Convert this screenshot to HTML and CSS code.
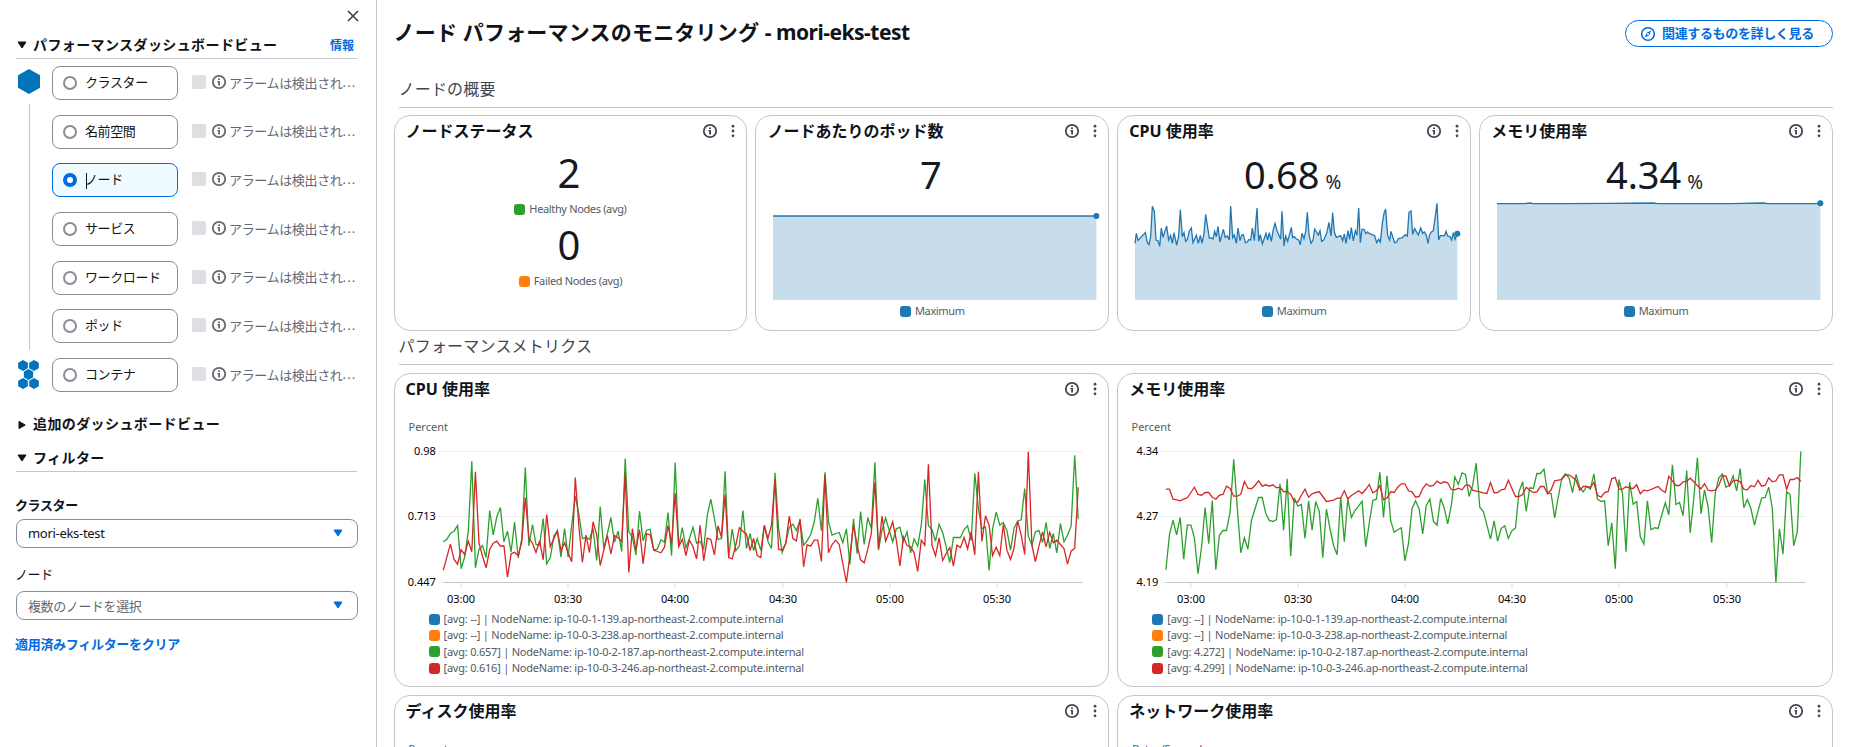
FILE: index.html
```
<!DOCTYPE html>
<html lang="ja">
<head>
    <meta charset="UTF-8">
    <meta name="viewport" content="width=device-width, initial-scale=1.0">
    <title>ノード パフォーマンスのモニタリング</title>
    <link rel="stylesheet" href="styles.css">
</head>
<body>
    <!-- shared icons -->
    <svg class="icon-defs" width="0" height="0">
        <symbol id="icon-info" viewBox="0 0 16 16">
            <circle cx="8" cy="8" r="6.2" fill="none" stroke="currentColor" stroke-width="1.8"/>
            <path d="M7 4.4h2v1.6H7zM6.4 7H9v4.6H7.2V8.2h-.8z" fill="currentColor"/>
        </symbol>
        <symbol id="icon-more" viewBox="0 0 16 16">
            <g fill="currentColor"><circle cx="8" cy="3.2" r="1.4"/><circle cx="8" cy="8" r="1.4"/><circle cx="8" cy="12.8" r="1.4"/></g>
        </symbol>
        <symbol id="icon-down" viewBox="0 0 10 8">
            <path d="M1 1h8L5 7z" fill="currentColor" stroke="currentColor" stroke-linejoin="round"/>
        </symbol>
        <symbol id="icon-right" viewBox="0 0 10 10">
            <path d="M2 1.4v7.2L8.2 5z" fill="currentColor" stroke="currentColor" stroke-linejoin="round"/>
        </symbol>
        <symbol id="hex" viewBox="0 0 22 25">
            <path d="M11 0l11 6.2v12.6L11 25 0 18.8V6.2z" fill="#0073bb"/>
        </symbol>
    </svg>

    <div class="app">
        <aside class="sidebar">
            <div class="close-row">
                <svg class="close" viewBox="0 0 12 12"><path d="M1 1l10 10M11 1L1 11" stroke="#424650" stroke-width="1.7"/></svg>
            </div>
            <div class="section-head lined">
                <svg class="caret"><use href="#icon-down"/></svg>
                <h3>パフォーマンスダッシュボードビュー</h3>
                <a class="info-link">情報</a>
            </div>

            <div class="views">
                <div class="rail">
                    <svg class="hex-one"><use href="#hex"/></svg>
                    <div class="rail-line"></div>
                    <svg class="hex-many" viewBox="0 0 21 29">
                        <use href="#hex" x="0" y="0" width="10" height="11"/>
                        <use href="#hex" x="11" y="0" width="10" height="11"/>
                        <use href="#hex" x="5.5" y="9" width="10" height="11"/>
                        <use href="#hex" x="0" y="18" width="10" height="11"/>
                        <use href="#hex" x="11" y="18" width="10" height="11"/>
                    </svg>
                </div>
                <div class="view-list">
                    <div class="view-row">
                        <div class="tile"><span class="radio"></span>クラスター</div>
                        <div class="alarm"><span class="alarm-box"></span><svg class="icon"><use href="#icon-info"/></svg>アラームは検出され<i>...</i></div>
                    </div>
                    <div class="view-row">
                        <div class="tile"><span class="radio"></span>名前空間</div>
                        <div class="alarm"><span class="alarm-box"></span><svg class="icon"><use href="#icon-info"/></svg>アラームは検出され<i>...</i></div>
                    </div>
                    <div class="view-row">
                        <div class="tile selected"><span class="radio"></span>ノード<span class="text-cursor"></span></div>
                        <div class="alarm"><span class="alarm-box"></span><svg class="icon"><use href="#icon-info"/></svg>アラームは検出され<i>...</i></div>
                    </div>
                    <div class="view-row">
                        <div class="tile"><span class="radio"></span>サービス</div>
                        <div class="alarm"><span class="alarm-box"></span><svg class="icon"><use href="#icon-info"/></svg>アラームは検出され<i>...</i></div>
                    </div>
                    <div class="view-row">
                        <div class="tile"><span class="radio"></span>ワークロード</div>
                        <div class="alarm"><span class="alarm-box"></span><svg class="icon"><use href="#icon-info"/></svg>アラームは検出され<i>...</i></div>
                    </div>
                    <div class="view-row">
                        <div class="tile"><span class="radio"></span>ポッド</div>
                        <div class="alarm"><span class="alarm-box"></span><svg class="icon"><use href="#icon-info"/></svg>アラームは検出され<i>...</i></div>
                    </div>
                    <div class="view-row">
                        <div class="tile"><span class="radio"></span>コンテナ</div>
                        <div class="alarm"><span class="alarm-box"></span><svg class="icon"><use href="#icon-info"/></svg>アラームは検出され<i>...</i></div>
                    </div>
                </div>
            </div>

            <div class="section-head more-views">
                <svg class="caret side"><use href="#icon-right"/></svg>
                <h3>追加のダッシュボードビュー</h3>
            </div>
            <div class="section-head lined filters">
                <svg class="caret"><use href="#icon-down"/></svg>
                <h3>フィルター</h3>
            </div>

            <div class="field">
                <label class="strong">クラスター</label>
                <div class="select"><span class="latin">mori-eks-test</span><svg><use href="#icon-down"/></svg></div>
            </div>
            <div class="field node-field">
                <label>ノード</label>
                <div class="select placeholder"><span>複数のノードを選択</span><svg><use href="#icon-down"/></svg></div>
            </div>
            <a class="clear-link">適用済みフィルターをクリア</a>
        </aside>

        <main class="main">
            <header class="page-head">
                <h1>ノード パフォーマンスのモニタリング <span class="latin">- mori-eks-test</span></h1>
                <button class="explore">
                    <svg viewBox="0 0 16 16"><circle cx="8" cy="8" r="6.3" fill="none" stroke="currentColor" stroke-width="1.6"/><path d="M11.2 4.6L9.3 9.3 4.8 11.4 6.7 6.7z" fill="currentColor"/><circle cx="8" cy="8" r="1" fill="#fff"/></svg>
                    <span>関連するものを詳しく見る</span>
                </button>
            </header>

            <h2 class="group-title">ノードの概要</h2>
            <div class="overview">
                <section class="card">
                    <div class="card-head"><h3>ノードステータス</h3><svg class="icon"><use href="#icon-info"/></svg><svg class="icon dots"><use href="#icon-more"/></svg></div>
                    <div class="status">
                        <div class="number">2</div>
                        <div class="key"><span class="swatch green"></span>Healthy Nodes (avg)</div>
                        <div class="number">0</div>
                        <div class="key"><span class="swatch orange"></span>Failed Nodes (avg)</div>
                    </div>
                </section>
                <section class="card">
                    <div class="card-head"><h3>ノードあたりのポッド数</h3><svg class="icon"><use href="#icon-info"/></svg><svg class="icon dots"><use href="#icon-more"/></svg></div>
                    <div class="number big">7</div>
                    <svg class="spark" data-spark="pods" viewBox="0 0 330 106"></svg>
                    <div class="key"><span class="swatch blue"></span>Maximum</div>
                </section>
                <section class="card">
                    <div class="card-head"><h3><span class="latin">CPU</span> 使用率</h3><svg class="icon"><use href="#icon-info"/></svg><svg class="icon dots"><use href="#icon-more"/></svg></div>
                    <div class="number big">0.68<small>%</small></div>
                    <svg class="spark" data-spark="cpu" viewBox="0 0 330 106"></svg>
                    <div class="key"><span class="swatch blue"></span>Maximum</div>
                </section>
                <section class="card">
                    <div class="card-head"><h3>メモリ使用率</h3><svg class="icon"><use href="#icon-info"/></svg><svg class="icon dots"><use href="#icon-more"/></svg></div>
                    <div class="number big">4.34<small>%</small></div>
                    <svg class="spark" data-spark="memory" viewBox="0 0 330 106"></svg>
                    <div class="key"><span class="swatch blue"></span>Maximum</div>
                </section>
            </div>

            <h2 class="group-title metrics">パフォーマンスメトリクス</h2>
            <div class="charts">
                <section class="card">
                    <div class="card-head"><h3><span class="latin">CPU</span> 使用率</h3><svg class="icon"><use href="#icon-info"/></svg><svg class="icon dots"><use href="#icon-more"/></svg></div>
                    <svg class="chart" data-chart="cpu"></svg>
                    <ul class="legend">
                        <li><span class="swatch blue"></span>[avg: --] | NodeName: ip-10-0-1-139.ap-northeast-2.compute.internal</li>
                        <li><span class="swatch orange"></span>[avg: --] | NodeName: ip-10-0-3-238.ap-northeast-2.compute.internal</li>
                        <li><span class="swatch green"></span>[avg: 0.657] | NodeName: ip-10-0-2-187.ap-northeast-2.compute.internal</li>
                        <li><span class="swatch red"></span>[avg: 0.616] | NodeName: ip-10-0-3-246.ap-northeast-2.compute.internal</li>
                    </ul>
                </section>
                <section class="card">
                    <div class="card-head"><h3>メモリ使用率</h3><svg class="icon"><use href="#icon-info"/></svg><svg class="icon dots"><use href="#icon-more"/></svg></div>
                    <svg class="chart" data-chart="memory"></svg>
                    <ul class="legend">
                        <li><span class="swatch blue"></span>[avg: --] | NodeName: ip-10-0-1-139.ap-northeast-2.compute.internal</li>
                        <li><span class="swatch orange"></span>[avg: --] | NodeName: ip-10-0-3-238.ap-northeast-2.compute.internal</li>
                        <li><span class="swatch green"></span>[avg: 4.272] | NodeName: ip-10-0-2-187.ap-northeast-2.compute.internal</li>
                        <li><span class="swatch red"></span>[avg: 4.299] | NodeName: ip-10-0-3-246.ap-northeast-2.compute.internal</li>
                    </ul>
                </section>
                <section class="card">
                    <div class="card-head"><h3>ディスク使用率</h3><svg class="icon"><use href="#icon-info"/></svg><svg class="icon dots"><use href="#icon-more"/></svg></div>
                    <div class="unit">Percent</div>
                </section>
                <section class="card">
                    <div class="card-head"><h3>ネットワーク使用率</h3><svg class="icon"><use href="#icon-info"/></svg><svg class="icon dots"><use href="#icon-more"/></svg></div>
                    <div class="unit">Bytes/Second</div>
                </section>
            </div>
        </main>
    </div>
    <script src="charts.js"></script>
</body>
</html>
```

FILE: styles.css
```
* {
    margin: 0;
    padding: 0;
    box-sizing: border-box;
}
body {
    font-family: "Noto Sans", "Noto Sans CJK JP", sans-serif;
    font-size: 13px;
    color: #0f141a;
    background: #fff;
    overflow: hidden;
}
.icon-defs {
    position: absolute;
}
.app {
    display: flex;
    height: 747px;
    overflow: hidden;
}
svg {
    display: block;
    flex: none;
}
i {
    font-style: normal;
}

/* Sidebar */
.sidebar {
    width: 377px;
    flex: none;
    padding: 0 19px 0 16px;
    border-right: 1px solid #c6c6cd;
}
.close-row {
    display: flex;
    justify-content: flex-end;
    padding: 10px 0 0;
    height: 32px;
}
.close {
    width: 12px;
    height: 12px;
    margin-right: -2px;
}
.section-head {
    display: flex;
    align-items: center;
    height: 27px;
    padding-left: 1px;
}
.section-head.lined {
    border-bottom: 1px solid #c6c6cd;
}
.section-head h3 {
    font-size: 14px;
    font-weight: 700;
    line-height: 20px;
    margin-left: 6px;
    padding-bottom: 1px;
    letter-spacing: 0.4px;
    white-space: nowrap;
}
.caret {
    width: 10px;
    height: 8px;
}
.caret.side {
    height: 10px;
}
.info-link {
    margin-left: auto;
    margin-right: 3px;
    padding-bottom: 1px;
    font-size: 12px;
    font-weight: 700;
    color: #006ce0;
}
.views {
    display: flex;
    padding-top: 7px;
}
.rail {
    width: 36px;
    padding: 3px 0 0 2px;
}
.hex-one {
    width: 22px;
    height: 25px;
}
.rail-line {
    width: 1px;
    height: 246px;
    margin: 10px 0 10px 11px;
    background: #c6c6cd;
}
.hex-many {
    width: 21px;
    height: 29px;
}
.view-list {
    flex: 1;
    display: flex;
    flex-direction: column;
    gap: 14.7px;
}
.view-row {
    display: flex;
    align-items: center;
    height: 34px;
}
.tile {
    position: relative;
    display: flex;
    align-items: center;
    width: 126px;
    height: 34px;
    padding: 0 0 2px 10px;
    border: 1px solid #8c8c94;
    border-radius: 8px;
    font-size: 13px;
    letter-spacing: -0.4px;
    line-height: 18px;
}
.tile.selected {
    background: #f0fbff;
    border-color: #006ce0;
}
.radio {
    width: 14px;
    height: 14px;
    margin: 2px 8px 0 0;
    border: 2px solid #8c8c94;
    border-radius: 50%;
    background: #fff;
}
.selected .radio {
    border: 4.5px solid #006ce0;
}
.text-cursor {
    position: absolute;
    left: 33px;
    top: 9px;
    width: 1px;
    height: 16px;
    background: #0f141a;
}
.alarm {
    display: flex;
    align-items: center;
    margin-left: 14px;
    padding-bottom: 2px;
    color: #656871;
    letter-spacing: -0.35px;
    white-space: nowrap;
}
.alarm-box {
    width: 14px;
    height: 14px;
    margin-right: 5px;
    border-radius: 2px;
    background: #dedee3;
}
.alarm .icon {
    margin-right: 2px;
}
.alarm i {
    letter-spacing: 1.2px;
}
.icon {
    width: 16px;
    height: 16px;
}
.more-views {
    margin-top: 19px;
}
.filters {
    margin-top: 7px;
}
.field {
    margin-top: 23px;
}
.field label {
    display: block;
    margin-left: -1px;
    line-height: 20px;
    letter-spacing: -0.4px;
}
.field .strong {
    font-weight: 700;
}
.select {
    display: flex;
    align-items: center;
    justify-content: space-between;
    width: 342px;
    height: 29px;
    margin-top: 4px;
    padding: 0 14px 1px 11px;
    border: 1px solid #8c8c94;
    border-radius: 8px;
}
.select .latin {
    letter-spacing: -0.3px;
}
.select svg {
    width: 10px;
    height: 8px;
    color: #006ce0;
}
.select.placeholder {
    color: #656871;
    letter-spacing: -0.4px;
}
.node-field {
    margin-top: 16px;
}
.node-field .select {
    margin-top: 7px;
}
.clear-link {
    display: block;
    margin: 14px 0 0 -1px;
    line-height: 20px;
    font-weight: 700;
    letter-spacing: -0.3px;
    color: #006ce0;
}

/* Main */
.main {
    flex: 1;
    min-width: 0;
    padding: 0 22px 0 16.5px;
}
.page-head {
    display: flex;
    align-items: center;
    justify-content: space-between;
    padding-top: 20px;
}
.page-head h1 {
    font-size: 21px;
    font-weight: 700;
    line-height: 25px;
    padding-bottom: 2px;
    letter-spacing: 0.2px;
    white-space: nowrap;
}
.page-head .latin {
    letter-spacing: -0.5px;
}
.explore {
    display: flex;
    align-items: center;
    width: 208px;
    height: 27px;
    padding-left: 14px;
    border: 1px solid #006ce0;
    border-radius: 14px;
    background: #fff;
    color: #006ce0;
    font: inherit;
    font-weight: 700;
    letter-spacing: -0.35px;
    white-space: nowrap;
}
.explore svg {
    width: 16px;
    height: 16px;
    margin-right: 6px;
}
.explore span {
    padding-bottom: 2px;
}
.group-title {
    height: 61px;
    padding: 32px 0 0 5px;
    font-size: 16px;
    font-weight: 400;
    line-height: 20px;
    letter-spacing: 0.2px;
    color: #424650;
    background: linear-gradient(#c6c6cd, #c6c6cd) 5.5px 100% / 100% 1px no-repeat;
}
.group-title.metrics {
    height: 34px;
    padding-top: 5px;
}
.overview {
    display: grid;
    grid-template-columns: repeat(4, 1fr);
    gap: 8px;
    margin-top: 7px;
}
.charts {
    display: grid;
    grid-template-columns: repeat(2, 1fr);
    gap: 8px;
    margin-top: 8px;
}
.card {
    border: 1px solid #c6c6cd;
    border-radius: 16px;
    background: #fff;
}
.overview .card {
    height: 216px;
}
.charts .card {
    height: 314.4px;
}
.card-head {
    display: flex;
    align-items: center;
    height: 30px;
    padding: 0 5px 0 11px;
    color: #424650;
}
.card-head h3 {
    flex: 1;
    font-size: 16px;
    font-weight: 700;
    line-height: 20px;
    padding-bottom: 1px;
    color: #0f141a;
}
.card-head .dots {
    margin-left: 7px;
}
.number {
    display: flex;
    align-items: baseline;
    justify-content: center;
    font-size: 40px;
    line-height: 52px;
    height: 52px;
    color: #16191f;
}
.number.big {
    margin-top: 2px;
    padding-right: 3px;
    font-size: 38px;
}
.number small {
    margin-left: 6px;
    font-size: 19px;
}
.key {
    display: flex;
    align-items: center;
    justify-content: center;
    height: 20px;
    font-size: 11px;
    line-height: 16px;
    letter-spacing: -0.35px;
    color: #545b64;
}
.status {
    padding-top: 1px;
}
.status .number {
    padding-right: 3px;
}
.swatch {
    width: 11px;
    height: 11px;
    margin-right: 4px;
    border-radius: 3px;
}
.blue {
    background: #1f77b4;
}
.orange {
    background: #ff7f0e;
}
.green {
    background: #2ca02c;
}
.red {
    background: #d62728;
}
.spark {
    width: 330px;
    height: 106px;
    margin: -4px 0 -1px 15.5px;
}
.chart {
    width: 100%;
    height: 207px;
    font-size: 11px;
}
.chart .unit-label {
    fill: #545b64;
}
.legend {
    list-style: none;
    padding-left: 34px;
    font-size: 11px;
    letter-spacing: -0.22px;
    color: #545b64;
}
.legend li {
    display: flex;
    align-items: center;
    height: 16.3px;
    line-height: 16px;
    white-space: nowrap;
}
.unit {
    padding: 15px 0 0 14px;
    font-size: 11px;
    line-height: 16px;
    color: #545b64;
}
```

FILE: charts.js
```
const NS = 'http://www.w3.org/2000/svg';

// One sample per minute, plot space: 259 is the top gridline, 652 the axis
const series = {
    cpu: {
        green: [530,522,505,498,481,611,575,498,288,608,552,541,577,436,509,455,427,530,498,560,471,578,520,307,542,478,538,540,460,596,577,512,498,576,490,576,480,393,445,520,516,522,490,586,424,550,505,457,531,498,559,280,500,515,570,438,527,495,492,555,552,524,531,442,572,292,543,487,548,520,486,534,529,550,450,402,460,523,520,318,575,492,557,542,436,550,505,556,520,556,480,528,550,323,490,562,535,486,477,496,467,540,527,508,470,399,497,321,470,510,505,502,533,491,598,461,566,439,538,457,490,291,555,495,458,495,530,491,486,530,500,563,521,543,480,343,482,493,528,477,503,545,592,517,517,517,493,482,526,325,430,491,485,616,492,441,480,472,496,555,490,468,464,370,513,540,500,496,532,472,550,505,563,475,530,510,483,270,462],
        red: [615,575,537,583,597,554,568,528,560,320,533,573,608,553,534,528,543,542,636,566,561,572,530,397,520,534,562,527,584,448,545,520,496,556,533,563,590,337,480,592,510,562,470,509,601,555,511,566,511,518,530,325,622,490,556,493,596,506,509,555,559,563,546,481,535,384,545,522,571,525,545,581,480,587,519,523,569,482,517,388,577,581,540,488,498,507,556,520,571,577,482,520,480,342,552,555,535,453,520,527,461,605,539,543,525,525,589,329,563,538,525,538,595,652,570,480,540,584,593,552,505,351,550,453,528,500,470,525,602,515,541,545,563,619,525,540,297,541,572,518,586,565,547,603,540,547,517,551,500,569,320,529,452,480,571,546,572,478,555,583,550,467,510,568,260,540,589,542,500,545,501,533,525,538,550,597,558,549,366]
    },
    memory: {
        green: [614,508,465,509,457,582,480,480,518,626,545,427,536,406,614,510,496,496,440,282,425,563,518,552,465,430,397,397,445,466,469,463,356,495,341,573,398,423,418,520,407,495,409,439,578,432,490,540,569,396,530,402,457,436,423,408,545,475,406,402,321,457,332,466,501,494,488,587,535,430,407,432,506,420,402,468,480,400,427,476,420,335,358,323,328,394,360,294,426,440,480,522,467,528,490,482,520,497,488,380,350,438,368,370,325,325,312,384,385,458,395,340,326,338,382,328,367,380,364,372,326,402,409,407,542,473,611,343,385,560,351,417,409,515,537,407,494,488,490,450,413,449,299,418,412,452,316,503,400,278,446,374,425,533,385,338,326,366,360,332,377,310,428,403,430,480,438,399,397,366,430,652,491,567,380,388,542,500,259],
        red: [372,372,402,404,407,402,398,382,366,388,390,382,382,396,402,390,388,363,370,393,393,387,349,369,371,360,347,363,359,363,359,368,366,379,380,387,410,410,390,372,396,386,382,380,394,409,407,405,399,399,377,401,391,384,377,385,373,358,383,377,361,404,398,380,382,366,356,356,377,380,396,394,370,356,363,361,348,355,350,353,373,374,369,374,360,360,375,378,380,383,385,352,383,382,374,372,345,370,394,394,388,366,375,382,380,364,364,386,374,347,345,343,330,329,336,345,375,364,364,367,352,390,396,382,379,340,337,372,372,365,368,370,359,386,375,377,373,368,364,375,382,333,347,361,361,350,348,339,350,361,371,356,375,377,375,361,332,333,362,347,345,350,372,374,361,365,345,363,360,338,350,347,329,329,372,343,343,337,349]
    }
};

const charts = {
    cpu: { labels: ['0.98', '0.713', '0.447'], x0: 48.3, firstTick: 66 },
    memory: { labels: ['4.34', '4.27', '4.19'], x0: 47.9, firstTick: 72.5 }
};
const times = ['03:00', '03:30', '04:00', '04:30', '05:00', '05:30'];
const STEP = 3.567;

function add(parent, name, attrs, text) {
    const el = document.createElementNS(NS, name);
    for (const key in attrs) el.setAttribute(key, attrs[key]);
    if (text) el.textContent = text;
    parent.appendChild(el);
}

function line(svg, x1, y1, x2, y2, stroke) {
    add(svg, 'line', { x1, y1, x2, y2, stroke });
}

document.querySelectorAll('[data-chart]').forEach(svg => {
    const name = svg.dataset.chart;
    const cfg = charts[name];
    add(svg, 'text', { x: 13.5, y: 27, class: 'unit-label' }, 'Percent');

    [47.5, 112.5, 178.5].forEach((y, i) => {
        line(svg, cfg.x0 - 5, y, 687.5, y, '#eee');
        add(svg, 'text', { x: cfg.x0 - 7.5, y: y + 3.5, 'text-anchor': 'end' }, cfg.labels[i]);
    });
    line(svg, cfg.x0, 178.5, 687.5, 178.5, '#c6c6c6');
    times.forEach((t, i) => {
        const x = Math.round(cfg.firstTick + i * 107.2);
        line(svg, x, 179, x, 184, '#ddd');
        add(svg, 'text', { x: x, y: 199, 'text-anchor': 'middle' }, t);
    });

    const colors = { green: '#2ca02c', red: '#d62728' };
    for (const key in colors) {
        const points = series[name][key]
            .map((v, i) => (cfg.x0 + i * STEP).toFixed(1) + ',' + (47.5 + (v - 259) / 3).toFixed(1))
            .join(' ');
        add(svg, 'polyline', { points, fill: 'none', stroke: colors[key], 'stroke-width': 1.3 });
    }
});

// Sparklines: x,y pairs in thirds of a pixel, baseline at 330
const sparks = {
    pods: '0,78 970,78',
    cpu: '0,160 4,130 9,151 31,128 37,158 42,164 47,140 52,49 58,64 63,150 69,152 74,169 79,114 84,142 95,108 101,150 107,136 112,160 117,128 125,166 131,138 136,59 142,140 147,128 152,154 157,148 163,123 169,114 174,158 184,136 190,160 196,136 201,160 207,130 212,73 223,145 228,143 234,147 239,124 244,140 249,110 255,156 265,118 271,142 277,138 283,150 287,48 293,143 298,135 304,160 309,114 315,152 320,136 325,134 331,158 337,156 341,149 347,150 352,114 358,152 366,54 371,154 376,134 382,162 393,130 398,150 403,128 409,154 415,118 420,100 426,122 437,148 441,64 447,168 452,138 458,154 469,112 473,143 478,140 484,147 491,150 496,164 501,130 507,146 512,125 517,67 522,135 528,160 534,150 539,117 550,135 555,122 560,154 566,150 575,130 582,97 588,138 593,68 598,126 604,142 617,137 623,152 628,132 633,160 639,122 644,148 649,113 655,153 661,122 666,136 671,54 676,158 681,118 687,118 693,131 698,126 704,131 719,137 725,158 731,148 736,156 742,100 747,70 752,57 758,137 764,150 768,124 779,158 785,156 790,146 801,144 811,134 817,138 822,67 828,63 833,133 839,116 850,135 857,114 863,130 868,126 874,136 879,160 884,134 889,126 895,122 906,40 911,150 916,137 929,137 933,124 938,138 945,140 950,150 955,128 960,148 967,131',
    memory: '0,41 80,41 100,39 108,41 200,41 340,40 470,39 482,41 700,41 800,39 812,41 955,41 970,40'
};

document.querySelectorAll('[data-spark]').forEach(svg => {
    const pts = sparks[svg.dataset.spark].split(' ').map(p => {
        const [x, y] = p.split(',').map(Number);
        return [x / 3 + 1, y / 3 - 6];
    });
    const [endX, endY] = pts[pts.length - 1];
    add(svg, 'polygon', { points: `1,104 ${pts.join(' ')} ${endX},104`, fill: '#c7ddeb' });
    add(svg, 'polyline', { points: pts.join(' '), fill: 'none', stroke: '#1f77b4', 'stroke-width': 1.3 });
    add(svg, 'circle', { cx: endX, cy: endY, r: 3, fill: '#1f77b4' });
});
```
